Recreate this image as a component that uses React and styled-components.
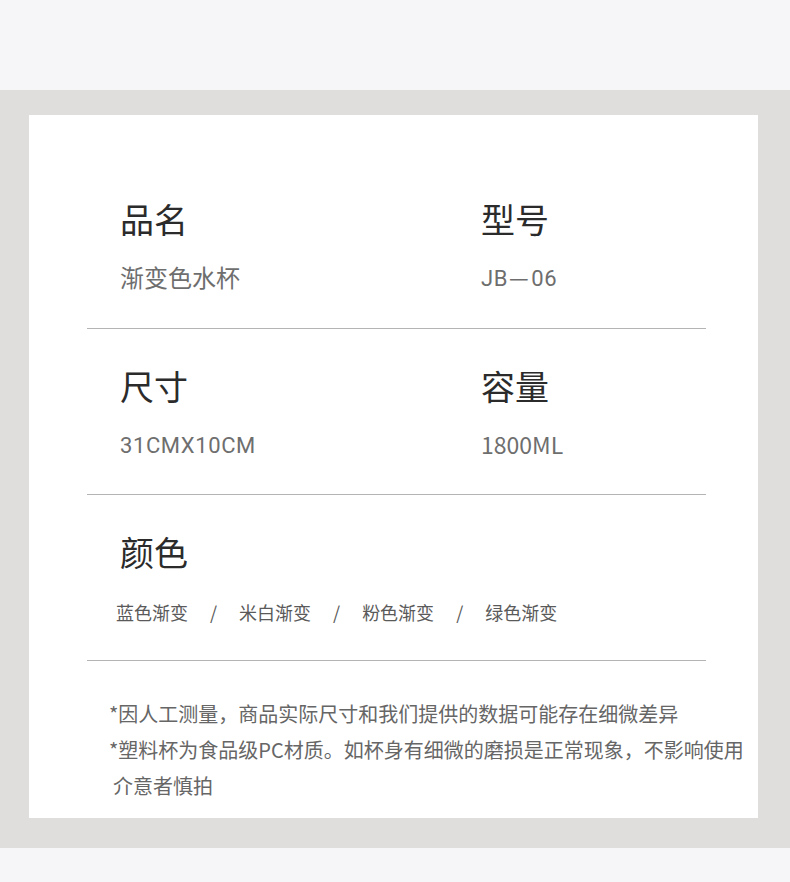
import React from "react";
import styled, { createGlobalStyle } from "styled-components";

const GlobalStyle = createGlobalStyle`
  body {
    margin: 0;
    background: #f6f5f7;
    font-family: "Noto Sans CJK SC", "Noto Sans", sans-serif;
  }
`;

const Page = styled.div`
  width: 790px;
  background: #f6f5f7;
`;

const Band = styled.div`
  height: ${(p) => p.h}px;
  background: #f6f5f7;
`;

const Frame = styled.section`
  background: #dfdedc;
  padding: 25px 32px 30px 29px;
`;

const Card = styled.div`
  background: #fff;
  height: 703px;
  box-sizing: border-box;
  padding: 84px 52px 0 58px;
`;

const Row = styled.div`
  display: grid;
  grid-template-columns: 361px 1fr;
  padding: ${(p) => (p.first ? "0" : "37px")} 0 ${(p) => (p.first ? "36px" : "35px")} 33px;
  border-bottom: 1px solid #b4b4b4;
`;

const Field = styled.div`
  display: flex;
  flex-direction: column;
  gap: 23px;
  grid-column: ${(p) => (p.wide ? "1 / -1" : "auto")};
`;

const Label = styled.div`
  font-size: 34px;
  line-height: 40px;
  color: #2b2b2b;
`;

const Value = styled.div`
  height: 30px;
  box-sizing: border-box;
  font-size: ${(p) => (p.din ? "22px" : "24px")};
  line-height: ${(p) => (p.din ? "27px" : "30px")};
  padding-top: ${(p) => (p.din ? "3px" : "0")};
  color: #6e6e6e;
  font-family: ${(p) =>
    p.din ? '"Roboto", "Noto Sans CJK SC", sans-serif' : '"Noto Sans CJK SC", sans-serif'};
  letter-spacing: ${(p) => (p.din ? "0.6px" : "0")};
`;

const Dash = styled.span`
  font-family: "Noto Sans CJK SC", sans-serif;
  line-height: 0;
  margin: 0 2px 0 1px;
`;

const Amount = styled(Value)`
  font-size: 23px;
`;

const Swatches = styled.div`
  display: flex;
  gap: 22px;
  margin-left: -4px;
  margin-top: 4px;
  white-space: nowrap;
  font-size: 18px;
  line-height: 26px;
  color: #5a5a5a;
`;

const Notes = styled.div`
  padding: 35px 0 0 22px;
  white-space: nowrap;
  font-size: 20px;
  line-height: 36px;
  color: #666;
`;

const NoteLine = styled.div`
  padding-left: ${(p) => (p.indent ? "4px" : "0")};
`;

const colors = ["蓝色渐变", "米白渐变", "粉色渐变", "绿色渐变"];

export default function App() {
  return (
    <Page>
      <GlobalStyle />
      <Band h={90} />
      <Frame>
        <Card>
          <Row first>
            <Field>
              <Label>品名</Label>
              <Value>渐变色水杯</Value>
            </Field>
            <Field>
              <Label>型号</Label>
              <Value din>
                JB<Dash>—</Dash>06
              </Value>
            </Field>
          </Row>
          <Row>
            <Field>
              <Label>尺寸</Label>
              <Value din>31CMX10CM</Value>
            </Field>
            <Field>
              <Label>容量</Label>
              <Amount>1800ML</Amount>
            </Field>
          </Row>
          <Row>
            <Field wide>
              <Label>颜色</Label>
              <Swatches>
                {colors.map((c, i) => (
                  <React.Fragment key={c}>
                    {i > 0 && <span>/</span>}
                    <span>{c}</span>
                  </React.Fragment>
                ))}
              </Swatches>
            </Field>
          </Row>
          <Notes>
            <NoteLine>*因人工测量，商品实际尺寸和我们提供的数据可能存在细微差异</NoteLine>
            <NoteLine>*塑料杯为食品级PC材质。如杯身有细微的磨损是正常现象，不影响使用</NoteLine>
            <NoteLine indent>介意者慎拍</NoteLine>
          </Notes>
        </Card>
      </Frame>
      <Band h={34} />
    </Page>
  );
}
